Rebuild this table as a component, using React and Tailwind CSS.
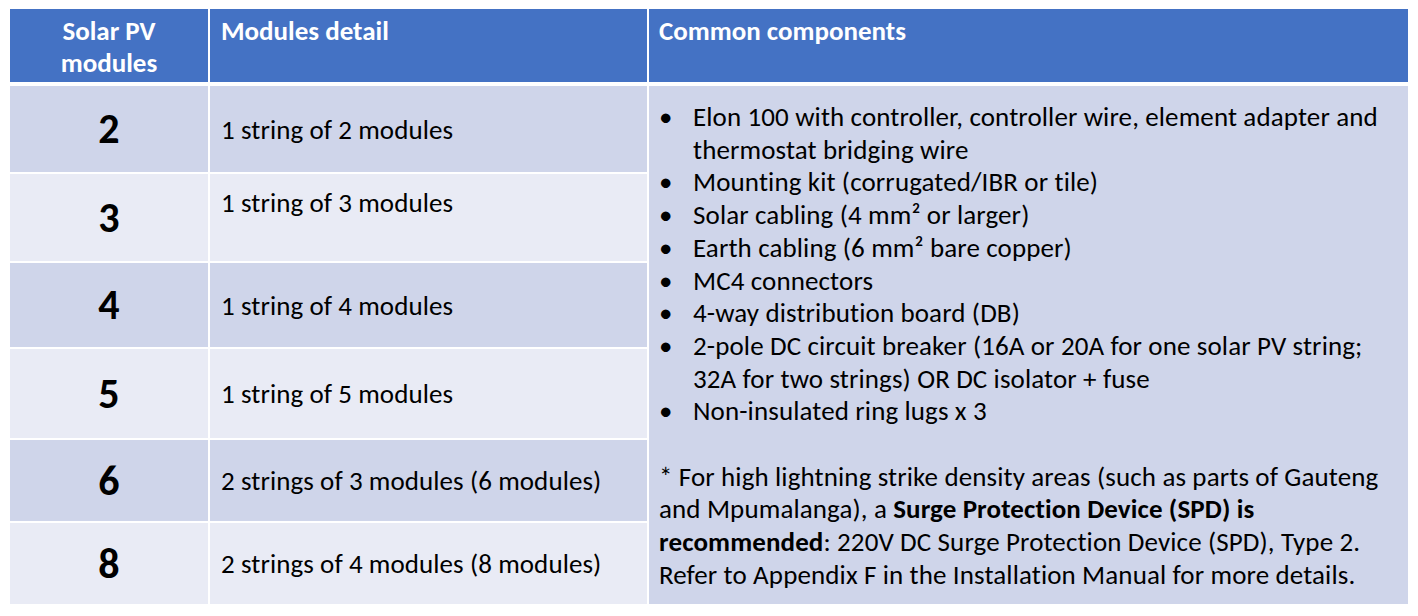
const face = '[font-family:Carlito,Calibri,Lato,sans-serif]';
const cols = 'grid grid-cols-[198px_437px_759px] gap-x-[2px]';

const rows = [
  { count: '2', detail: '1 string of 2 modules', tone: 'bg-[#CFD5EA]' },
  { count: '3', detail: '1 string of 3 modules', tone: 'bg-[#E9EBF5]', top: true },
  { count: '4', detail: '1 string of 4 modules', tone: 'bg-[#CFD5EA]' },
  { count: '5', detail: '1 string of 5 modules', tone: 'bg-[#E9EBF5]' },
  { count: '6', detail: '2 strings of 3 modules (6 modules)', tone: 'bg-[#CFD5EA]' },
  { count: '8', detail: '2 strings of 4 modules (8 modules)', tone: 'bg-[#E9EBF5]' },
];

const components = [
  ['Elon 100 with controller, controller wire, element adapter and', 'thermostat bridging wire'],
  ['Mounting kit (corrugated/IBR or tile)'],
  ['Solar cabling (4 mm² or larger)'],
  ['Earth cabling (6 mm² bare copper)'],
  ['MC4 connectors'],
  ['4-way distribution board (DB)'],
  ['2-pole DC circuit breaker (16A or 20A for one solar PV string;', '32A for two strings) OR DC isolator + fuse'],
  ['Non-insulated ring lugs x 3'],
];

export default function App() {
  return (
    <div className={`${face} min-h-[616px] w-[1418px] bg-white pl-[10px] pt-[9px] text-black`}>
      <div className={`${cols} mb-[4px] h-[73px] text-[27px] font-bold leading-[32px] text-white`}>
        <div className="bg-[#4472C4] pt-[6px] text-center">
          Solar PV
          <br />
          modules
        </div>
        <div className="bg-[#4472C4] pl-[11px] pt-[6px]">Modules detail</div>
        <div className="bg-[#4472C4] pl-[10px] pt-[6px]">Common components</div>
      </div>

      <div className={`${cols} grid-rows-[86px_87px_84px_89px_81px_81px] gap-y-[2px]`}>
        {rows.map((row, i) => (
          <div key={row.count} className="contents">
            <div
              className={`${row.tone} col-start-1 flex items-center justify-center text-[42px] font-bold leading-none`}
              style={{ gridRowStart: i + 1 }}
            >
              {row.count}
            </div>
            <div
              className={`${row.tone} col-start-2 flex whitespace-nowrap pl-[11px] text-[27px] leading-[33px] tracking-[0.08px] ${row.top ? 'items-start pt-[12px]' : 'items-center'}`}
              style={{ gridRowStart: i + 1 }}
            >
              {row.detail}
            </div>
          </div>
        ))}

        <div className="col-start-3 row-span-6 row-start-1 whitespace-nowrap bg-[#CFD5EA] pl-[10px] pt-[15px] text-[27px] leading-[32.7px] tracking-[0.12px]">
          <ul>
            {components.map((lines) => (
              <li key={lines[0]} className="flex">
                <span className="w-[34px] shrink-0 pl-0">•</span>
                <span>
                  {lines.map((line, j) => (
                    <span key={line}>
                      {j > 0 && <br />}
                      {line}
                    </span>
                  ))}
                </span>
              </li>
            ))}
          </ul>
          <p className="mt-[32.7px]">
            * For high lightning strike density areas (such as parts of Gauteng
            <br />
            and Mpumalanga), a <b>Surge Protection Device (SPD) is</b>
            <br />
            <b>recommended</b>: 220V DC Surge Protection Device (SPD), Type 2.
            <br />
            Refer to Appendix F in the Installation Manual for more details.
          </p>
        </div>
      </div>
    </div>
  );
}
